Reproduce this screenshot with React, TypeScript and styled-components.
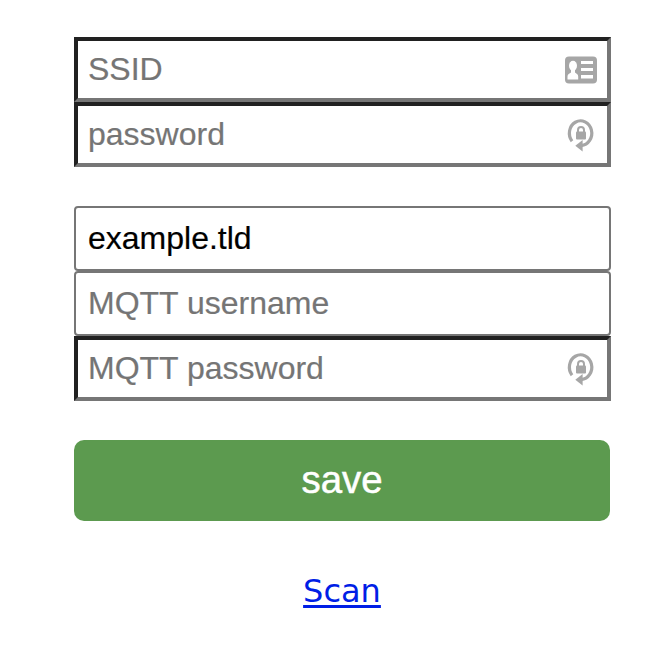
import React from "react";
import styled, { createGlobalStyle, css } from "styled-components";

const GlobalStyle = createGlobalStyle`
  body {
    margin: 0;
    background: #fff;
  }
`;

const Page = styled.main`
  box-sizing: border-box;
  width: 670px;
  height: 660px;
  padding: 37px 59px 0 74px;
  overflow: hidden;
  font-family: "DejaVu Sans", sans-serif;
`;

const Form = styled.form`
  display: flex;
  flex-direction: column;
`;

const FieldGroup = styled.div`
  display: flex;
  flex-direction: column;
  margin-bottom: 39px;
`;

const Field = styled.label<{ $inset?: boolean }>`
  box-sizing: border-box;
  display: flex;
  align-items: center;
  height: 65px;
  background: #fff;
  ${({ $inset }) =>
    $inset
      ? css`
          border: 4px solid;
          border-color: #212121 #767676 #767676 #212121;
          padding: 0 8px 0 10px;
        `
      : css`
          border: 2px solid #767676;
          border-radius: 4px;
          padding: 0 10px 0 12px;
        `}
`;

const Input = styled.input`
  flex: 1;
  min-width: 0;
  height: 38px;
  margin: 0 0 1px;
  padding: 0;
  border: 0;
  outline: 0;
  background: transparent;
  color: #000;
  font: 32px "Liberation Sans", Arial, sans-serif;
  -webkit-text-stroke: 0.2px;

  &::placeholder {
    color: #757575;
    opacity: 1;
  }
`;

const IconSvg = styled.svg`
  flex: none;
  display: block;
  width: 36px;
  height: 36px;
  margin-bottom: 1px;
`;

const SaveButton = styled.button`
  width: 536px;
  height: 81px;
  padding: 0 0 2px;
  border: 0;
  border-radius: 10px;
  background: #5c9a4f;
  color: #fff;
  font: 38.4px "Liberation Sans", Arial, sans-serif;
  -webkit-text-stroke: 0.5px;
`;

const LinkRow = styled.div`
  width: 536px;
  margin-top: 50px;
  text-align: center;
  font-size: 32px;
  line-height: 40px;
`;

const ScanLink = styled.a`
  color: #001ee6;
  text-decoration: underline;
  text-decoration-thickness: 3px;
  text-underline-offset: 3px;
  text-decoration-skip-ink: none;
`;

const ContactIcon = () => (
  <IconSvg viewBox="0 0 36 36" aria-hidden="true">
    <rect x="2" y="5.500" width="32" height="27" rx="4" fill="#a6a6a6" />
    <g fill="#fff">
      <ellipse cx="10" cy="14.700" rx="4" ry="5" />
      <path d="M8 17.500h4v4l2 1.600c.8.600 1.200 1.400 1.200 2.400v3H4.500v-3c0-1 .4-1.800 1.200-2.400L8 21.500z" />
      <rect x="18" y="10" width="12" height="3" />
      <rect x="18" y="17" width="12" height="3" />
      <rect x="18" y="24" width="12" height="3.500" />
    </g>
  </IconSvg>
);

const PasswordIcon = () => (
  <IconSvg viewBox="0 0 36 36" aria-hidden="true">
    <path
      d="M9 25.200A11.200 12.400 0 1 1 18.200 29.600"
      fill="none"
      stroke="#a6a6a6"
      strokeWidth="3.2"
    />
    <path d="M12.300 29.800 19.600 24V35.500z" fill="#a6a6a6" />
    <rect x="13" y="15.500" width="10" height="8" rx="1" fill="#a6a6a6" />
    <path
      d="M15 16v-2a3 3 0 0 1 6 0v2"
      fill="none"
      stroke="#a6a6a6"
      strokeWidth="2"
    />
  </IconSvg>
);

export default function App() {
  return (
    <>
      <GlobalStyle />
      <Page>
        <Form onSubmit={(e: React.FormEvent) => e.preventDefault()}>
          <FieldGroup>
            <Field $inset>
              <Input placeholder="SSID" />
              <ContactIcon />
            </Field>
            <Field $inset>
              <Input type="password" placeholder="password" />
              <PasswordIcon />
            </Field>
          </FieldGroup>
          <FieldGroup>
            <Field>
              <Input defaultValue="example.tld" />
            </Field>
            <Field>
              <Input placeholder="MQTT username" />
            </Field>
            <Field $inset>
              <Input type="password" placeholder="MQTT password" />
              <PasswordIcon />
            </Field>
          </FieldGroup>
          <SaveButton type="submit">save</SaveButton>
        </Form>
        <LinkRow>
          <ScanLink href="#scan">Scan</ScanLink>
        </LinkRow>
      </Page>
    </>
  );
}
